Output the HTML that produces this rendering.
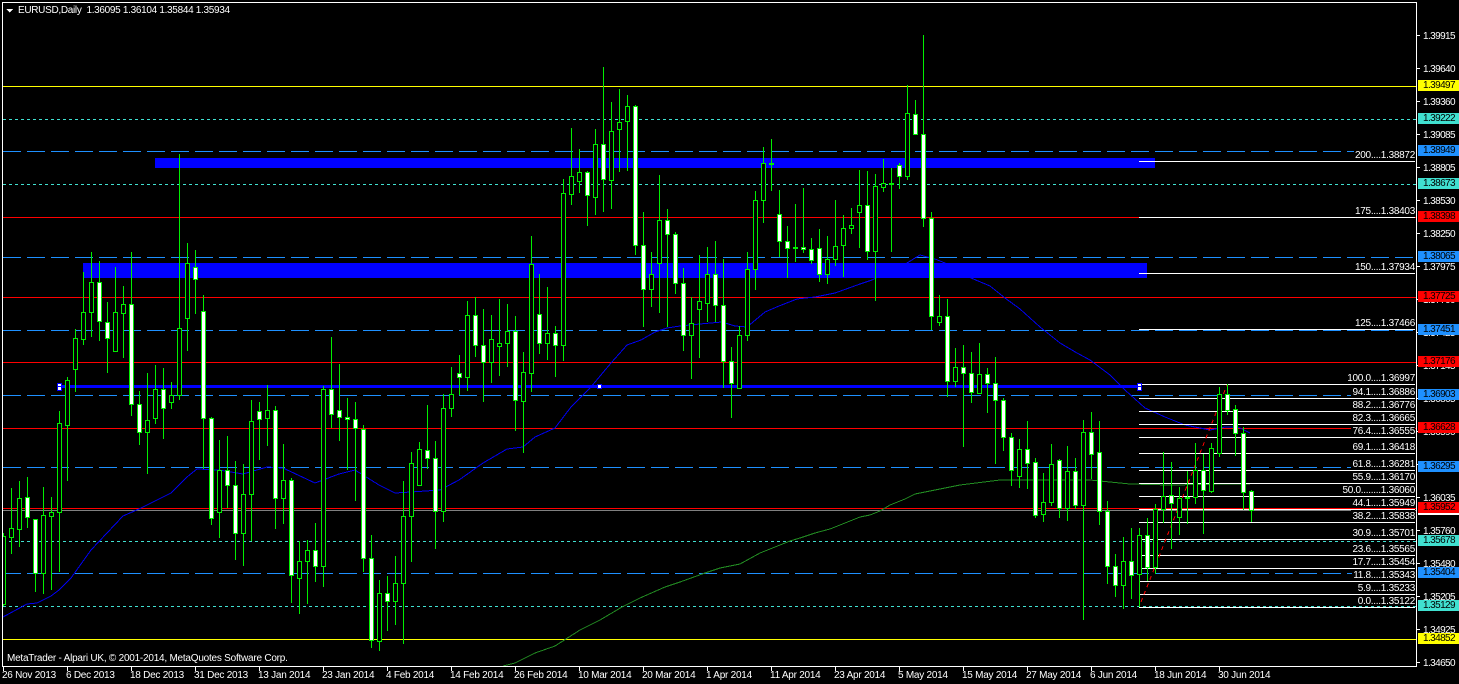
<!DOCTYPE html>
<html><head><meta charset="utf-8"><style>
html,body{margin:0;padding:0;background:#000;width:1459px;height:684px;overflow:hidden}
body{position:relative;font-family:"Liberation Sans",sans-serif;font-size:10px;line-height:11px;color:#fff}
svg{position:absolute;left:0;top:0}
div{position:absolute;white-space:pre}
.p{left:1423px;letter-spacing:-.6px;height:11px;line-height:13px}
.t{left:1418px;width:36px;padding-left:5px;height:11px;color:#000;letter-spacing:-.6px}
.f{right:44px;height:11px;background:#000;padding-left:1px;letter-spacing:-.28px;line-height:13px}
.x{top:669px;letter-spacing:-.25px;line-height:14px}
.y{background:#ff0}.c{background:#40e0d0}.b{background:#1e90ff}.r{background:#f00}
</style></head><body>
<svg width="1459" height="684" shape-rendering="crispEdges" fill="none">
<g stroke="#ff0"><path d="M3 86.5H1416M3 639.5H1416"/></g>
<g stroke="#40e0d0" stroke-dasharray="3 3"><path d="M3 119.5H1416M3 184.5H1416M3 541.5H1416M3 606.5H1416"/></g>
<g stroke="#1e90ff" stroke-dasharray="18 6"><path d="M3 151.5H1416M3 257.5H1416M3 330.5H1416M3 395.5H1416M3 467.5H1416M3 573.5H1416"/></g>
<g stroke="#f00"><path d="M3 217.5H1416M3 297.5H1416M3 362.5H1416M3 428.5H1416M3 508.5H1416"/></g>
<path d="M3 510.5H1416" stroke="#808080"/>
<polyline stroke="#0000f0" points="3,617 27,604 37,603 51,596 59,590 71,578 91,550 107,533 123,516 139,509 155,501 171,493 187,477 197,469 219,470 243,474 267,467 283,468 315,483 339,474 355,470 379,485 395,493 411,492 440,490 459,480 483,463 507,449 523,447 535,437 555,428 571,407 590,388 611,363 627,345 641,340 655,332 667,328 680,326 700,324 722,322 735,326 747,327 765,312 779,306 797,299 815,297 835,293 860,284 872,280 907,263 920,255 935,259 945,263 971,278 990,286 1005,298 1020,309 1040,327 1060,343 1077,353 1090,360 1110,375 1125,390 1145,408 1165,417 1185,425 1210,430 1225,427 1238,427 1250,433"/>
<polyline stroke="#228b22" points="503,666 515,663 535,653 555,646 580,630 600,620 622,607 640,598 665,587 680,582 705,573 720,568 740,564 760,553 770,549 790,541 800,538 815,533 830,529 845,523 860,517 870,515 880,511 890,505 905,499 915,494 930,491 945,488 960,485 1000,480 1060,480 1090,480 1120,483 1130,484 1170,485 1230,484 1250,484"/>
<rect x="155" y="158" width="1000" height="10" fill="#00f"/>
<rect x="83" y="263" width="1064" height="15" fill="#00f"/>
<path stroke="#fff" d="M1139 161.5H1415M1139 217.5H1415M1139 273.5H1415M1139 329.5H1415M1139 384.5H1415M1139 398.5H1415M1139 411.5H1415M1139 424.5H1415M1139 437.5H1415M1139 453.5H1415M1139 470.5H1415M1139 483.5H1415M1139 496.5H1415M1139 509.5H1415M1139 522.5H1415M1139 539.5H1415M1139 555.5H1415M1139 568.5H1415M1139 581.5H1415M1139 594.5H1415M1139 607.5H1415"/>
<path stroke="#f00" stroke-dasharray="4 4" d="M1141 602L1227 385"/>
<rect x="59" y="385" width="1080" height="3" fill="#00f"/>
<path stroke="#00ee00" d="M3.5 533V606M11.5 488V554M19.5 481V547M27.5 477V528M35.5 519V592M43.5 487V594M51.5 497V590M59.5 411V572M67.5 377V481M75.5 329V392M83.5 272V345M91.5 252V337M99.5 261V341M107.5 302V373M115.5 267V351M123.5 286V358M131.5 252V416M139.5 391V445M147.5 373V474M155.5 365V424M163.5 368V439M171.5 382V409M179.5 154V400M187.5 243V351M195.5 250V314M203.5 295V469M211.5 417V525M219.5 440V538M227.5 436V508M235.5 461V560M243.5 464V566M251.5 400V541M259.5 402V460M267.5 385V446M275.5 406V529M283.5 444V524M291.5 478V603M299.5 541V614M307.5 540V604M315.5 523V582M323.5 386V587M331.5 337V428M339.5 364V441M347.5 398V470M355.5 402V501M363.5 425V572M371.5 535V648M379.5 580V651M387.5 576V631M395.5 556V625M403.5 481V644M411.5 452V562M419.5 442V485M427.5 405V469M435.5 441V549M443.5 394V522M451.5 367V417M459.5 355V395M467.5 301V391M475.5 297V357M483.5 309V402M491.5 315V383M499.5 299V376M507.5 304V367M515.5 316V431M523.5 352V453M531.5 236V392M539.5 274V354M547.5 287V360M555.5 326V377M563.5 179V361M571.5 128V205M579.5 149V193M587.5 171V226M595.5 129V215M603.5 67V212M611.5 102V209M619.5 89V172M627.5 95V171M635.5 105V255M643.5 212V327M651.5 252V307M659.5 175V313M667.5 209V327M675.5 232V294M683.5 268V351M691.5 297V379M699.5 255V358M707.5 247V322M715.5 241V322M723.5 259V388M731.5 347V418M739.5 326V389M747.5 252V341M755.5 191V290M763.5 147V223M771.5 139V191M779.5 190V257M787.5 226V278M795.5 204V262M803.5 188V253M811.5 238V264M819.5 229V282M827.5 236V284M835.5 200V266M843.5 215V277M851.5 208V234M859.5 170V248M867.5 171V260M875.5 174V301M883.5 159V192M891.5 168V252M899.5 163V189M907.5 85V180M915.5 100V134M923.5 35V227M931.5 212V330M939.5 295V326M947.5 299V397M955.5 348V387M963.5 345V447M971.5 352V403M979.5 343V393M987.5 368V413M995.5 357V464M1003.5 398V451M1011.5 433V486M1019.5 439V488M1027.5 421V489M1035.5 458V518M1043.5 473V522M1051.5 444V506M1059.5 459V518M1067.5 446V521M1075.5 458V509M1083.5 420V620M1091.5 412V479M1099.5 421V525M1107.5 501V584M1115.5 554V597M1123.5 537V609M1131.5 528V599M1139.5 528V607M1147.5 518V581M1155.5 504V574M1163.5 452V523M1171.5 462V549M1179.5 487V535M1187.5 471V524M1195.5 443V504M1203.5 454V534M1211.5 443V493M1219.5 387V457M1227.5 384V415M1235.5 405V456M1243.5 427V510M1251.5 490V522"/>
<path stroke="#00ee00" fill="#000" d="M2.5 536.5h3V604.5h-3zM9.5 528.5h4V537.5h-4zM17.5 498.5h4V529.5h-4zM41.5 515.5h4V573.5h-4zM49.5 512.5h4V516.5h-4zM57.5 423.5h4V512.5h-4zM65.5 380.5h4V425.5h-4zM73.5 338.5h4V369.5h-4zM81.5 312.5h4V339.5h-4zM89.5 282.5h4V312.5h-4zM113.5 312.5h4V351.5h-4zM121.5 304.5h4V313.5h-4zM145.5 420.5h4V432.5h-4zM153.5 389.5h4V418.5h-4zM169.5 395.5h4V402.5h-4zM177.5 328.5h4V395.5h-4zM185.5 263.5h4V318.5h-4zM217.5 470.5h4V512.5h-4zM241.5 494.5h4V533.5h-4zM249.5 421.5h4V494.5h-4zM265.5 410.5h4V418.5h-4zM281.5 480.5h4V498.5h-4zM297.5 561.5h4V578.5h-4zM305.5 550.5h4V561.5h-4zM321.5 389.5h4V566.5h-4zM377.5 593.5h4V641.5h-4zM393.5 583.5h4V601.5h-4zM401.5 516.5h4V583.5h-4zM409.5 463.5h4V516.5h-4zM417.5 449.5h4V485.5h-4zM441.5 408.5h4V511.5h-4zM449.5 394.5h4V408.5h-4zM465.5 315.5h4V377.5h-4zM489.5 339.5h4V362.5h-4zM497.5 343.5h4V346.5h-4zM505.5 331.5h4V343.5h-4zM521.5 372.5h4V401.5h-4zM529.5 264.5h4V373.5h-4zM545.5 333.5h4V343.5h-4zM561.5 193.5h4V345.5h-4zM569.5 176.5h4V194.5h-4zM577.5 172.5h4V181.5h-4zM593.5 144.5h4V197.5h-4zM609.5 131.5h4V180.5h-4zM617.5 122.5h4V129.5h-4zM625.5 106.5h4V121.5h-4zM649.5 274.5h4V289.5h-4zM657.5 220.5h4V263.5h-4zM689.5 323.5h4V335.5h-4zM697.5 301.5h4V309.5h-4zM705.5 274.5h4V303.5h-4zM737.5 335.5h4V388.5h-4zM745.5 269.5h4V335.5h-4zM753.5 200.5h4V269.5h-4zM761.5 163.5h4V200.5h-4zM825.5 259.5h4V274.5h-4zM833.5 246.5h4V259.5h-4zM841.5 228.5h4V245.5h-4zM849.5 225.5h4V228.5h-4zM857.5 205.5h4V212.5h-4zM873.5 186.5h4V251.5h-4zM881.5 183.5h4V187.5h-4zM905.5 113.5h4V176.5h-4zM937.5 316.5h4V322.5h-4zM953.5 367.5h4V381.5h-4zM977.5 374.5h4V393.5h-4zM1017.5 449.5h4V476.5h-4zM1041.5 502.5h4V514.5h-4zM1049.5 464.5h4V502.5h-4zM1065.5 471.5h4V508.5h-4zM1081.5 432.5h4V505.5h-4zM1121.5 561.5h4V585.5h-4zM1137.5 535.5h4V574.5h-4zM1153.5 509.5h4V567.5h-4zM1161.5 496.5h4V509.5h-4zM1177.5 498.5h4V517.5h-4zM1193.5 470.5h4V497.5h-4zM1209.5 448.5h4V491.5h-4zM1217.5 394.5h4V453.5h-4z"/>
<path stroke="#00ee00" fill="#fff" d="M25.5 497.5h4V517.5h-4zM33.5 519.5h4V573.5h-4zM97.5 282.5h4V321.5h-4zM105.5 322.5h4V338.5h-4zM129.5 304.5h4V404.5h-4zM137.5 404.5h4V432.5h-4zM161.5 389.5h4V408.5h-4zM193.5 267.5h4V279.5h-4zM201.5 311.5h4V418.5h-4zM209.5 418.5h4V518.5h-4zM225.5 470.5h4V485.5h-4zM233.5 485.5h4V533.5h-4zM257.5 411.5h4V419.5h-4zM273.5 410.5h4V498.5h-4zM289.5 480.5h4V575.5h-4zM313.5 550.5h4V566.5h-4zM329.5 389.5h4V414.5h-4zM337.5 410.5h4V417.5h-4zM345.5 417.5h4V419.5h-4zM353.5 419.5h4V428.5h-4zM361.5 429.5h4V558.5h-4zM369.5 558.5h4V640.5h-4zM385.5 593.5h4V601.5h-4zM425.5 450.5h4V458.5h-4zM433.5 458.5h4V511.5h-4zM457.5 373.5h4V377.5h-4zM473.5 315.5h4V345.5h-4zM481.5 345.5h4V362.5h-4zM513.5 331.5h4V400.5h-4zM537.5 314.5h4V343.5h-4zM553.5 333.5h4V345.5h-4zM585.5 172.5h4V195.5h-4zM601.5 144.5h4V179.5h-4zM633.5 106.5h4V245.5h-4zM641.5 245.5h4V289.5h-4zM665.5 220.5h4V234.5h-4zM673.5 234.5h4V283.5h-4zM681.5 283.5h4V335.5h-4zM713.5 274.5h4V305.5h-4zM721.5 305.5h4V361.5h-4zM729.5 361.5h4V383.5h-4zM769.5 163.5h4V164.5h-4zM777.5 214.5h4V241.5h-4zM785.5 241.5h4V248.5h-4zM793.5 247.5h4V248.5h-4zM801.5 247.5h4V249.5h-4zM809.5 249.5h4V260.5h-4zM817.5 248.5h4V274.5h-4zM865.5 205.5h4V251.5h-4zM889.5 183.5h4V184.5h-4zM897.5 165.5h4V176.5h-4zM913.5 114.5h4V134.5h-4zM921.5 134.5h4V218.5h-4zM929.5 218.5h4V316.5h-4zM945.5 316.5h4V381.5h-4zM961.5 367.5h4V373.5h-4zM969.5 373.5h4V392.5h-4zM985.5 374.5h4V383.5h-4zM993.5 383.5h4V400.5h-4zM1001.5 400.5h4V437.5h-4zM1009.5 437.5h4V470.5h-4zM1025.5 449.5h4V463.5h-4zM1033.5 462.5h4V515.5h-4zM1057.5 460.5h4V508.5h-4zM1073.5 471.5h4V505.5h-4zM1089.5 432.5h4V454.5h-4zM1097.5 452.5h4V511.5h-4zM1105.5 511.5h4V566.5h-4zM1113.5 566.5h4V585.5h-4zM1129.5 561.5h4V575.5h-4zM1145.5 535.5h4V567.5h-4zM1169.5 495.5h4V503.5h-4zM1185.5 497.5h4V498.5h-4zM1201.5 470.5h4V490.5h-4zM1225.5 394.5h4V410.5h-4zM1233.5 409.5h4V433.5h-4zM1241.5 433.5h4V492.5h-4zM1249.5 491.5h4V510.5h-4z"/>
<rect x="57" y="383" width="5" height="8" fill="#00f"/><rect x="58" y="384" width="3" height="2" fill="#fff"/><rect x="58" y="387" width="3" height="3" fill="#fff"/>
<rect x="597" y="384" width="5" height="5" fill="#00f"/><rect x="598" y="385" width="3" height="3" fill="#fff"/>
<rect x="1137" y="383" width="5" height="8" fill="#00f"/><rect x="1138" y="384" width="3" height="2" fill="#fff"/><rect x="1138" y="387" width="3" height="3" fill="#fff"/>
<path stroke="#fff" d="M2.5 2V667M2 2.5H1417M1416.5 2V667M2 666.5H1417"/>
<path stroke="#fff" d="M3.5 667V671M67.5 667V671M131.5 667V671M195.5 667V671M259.5 667V671M323.5 667V671M387.5 667V671M451.5 667V671M515.5 667V671M579.5 667V671M643.5 667V671M707.5 667V671M771.5 667V671M835.5 667V671M899.5 667V671M963.5 667V671M1027.5 667V671M1091.5 667V671M1155.5 667V671M1219.5 667V671M1417 35.5H1420M1417 68.5H1420M1417 101.5H1420M1417 134.5H1420M1417 167.5H1420M1417 200.5H1420M1417 233.5H1420M1417 266.5H1420M1417 299.5H1420M1417 332.5H1420M1417 365.5H1420M1417 398.5H1420M1417 431.5H1420M1417 464.5H1420M1417 497.5H1420M1417 530.5H1420M1417 563.5H1420M1417 596.5H1420M1417 629.5H1420M1417 662.5H1420"/>
<path fill="#fff" d="M6 9H13L9.5 12.5Z"/>
</svg>
<div style="left:18px;top:5px;letter-spacing:-.31px">EURUSD,Daily  1.36095 1.36104 1.35844 1.35934</div>
<div style="left:7px;top:653px;letter-spacing:-.23px">MetaTrader - Alpari UK, © 2001-2014, MetaQuotes Software Corp.</div>
<div class="x" style="left:2px">26 Nov 2013</div>
<div class="x" style="left:66px">6 Dec 2013</div>
<div class="x" style="left:130px">18 Dec 2013</div>
<div class="x" style="left:194px">31 Dec 2013</div>
<div class="x" style="left:258px">13 Jan 2014</div>
<div class="x" style="left:322px">23 Jan 2014</div>
<div class="x" style="left:386px">4 Feb 2014</div>
<div class="x" style="left:450px">14 Feb 2014</div>
<div class="x" style="left:514px">26 Feb 2014</div>
<div class="x" style="left:578px">10 Mar 2014</div>
<div class="x" style="left:642px">20 Mar 2014</div>
<div class="x" style="left:706px">1 Apr 2014</div>
<div class="x" style="left:770px">11 Apr 2014</div>
<div class="x" style="left:834px">23 Apr 2014</div>
<div class="x" style="left:898px">5 May 2014</div>
<div class="x" style="left:962px">15 May 2014</div>
<div class="x" style="left:1026px">27 May 2014</div>
<div class="x" style="left:1090px">6 Jun 2014</div>
<div class="x" style="left:1154px">18 Jun 2014</div>
<div class="x" style="left:1218px">30 Jun 2014</div>
<div class="p" style="top:30px">1.39915</div>
<div class="p" style="top:63px">1.39640</div>
<div class="p" style="top:96px">1.39360</div>
<div class="p" style="top:129px">1.39085</div>
<div class="p" style="top:162px">1.38805</div>
<div class="p" style="top:195px">1.38530</div>
<div class="p" style="top:228px">1.38250</div>
<div class="p" style="top:261px">1.37975</div>
<div class="p" style="top:294px">1.37700</div>
<div class="p" style="top:327px">1.37425</div>
<div class="p" style="top:360px">1.37145</div>
<div class="p" style="top:393px">1.36865</div>
<div class="p" style="top:426px">1.36590</div>
<div class="p" style="top:459px">1.36310</div>
<div class="p" style="top:492px">1.36035</div>
<div class="p" style="top:525px">1.35760</div>
<div class="p" style="top:558px">1.35480</div>
<div class="p" style="top:591px">1.35205</div>
<div class="p" style="top:624px">1.34925</div>
<div class="p" style="top:657px">1.34650</div>
<div style="left:1418px;top:504px;width:41px;height:11px;background:#fff"></div>
<div class="t y" style="top:80px">1.39497</div>
<div class="t c" style="top:113px">1.39222</div>
<div class="t b" style="top:145px">1.38949</div>
<div class="t c" style="top:178px">1.38673</div>
<div class="t r" style="top:211px">1.38398</div>
<div class="t b" style="top:251px">1.38065</div>
<div class="t r" style="top:291px">1.37725</div>
<div class="t b" style="top:324px">1.37451</div>
<div class="t r" style="top:356px">1.37176</div>
<div class="t b" style="top:389px">1.36903</div>
<div class="t r" style="top:422px">1.36628</div>
<div class="t b" style="top:461px">1.36295</div>
<div class="t r" style="top:502px">1.35952</div>
<div class="t c" style="top:535px">1.35678</div>
<div class="t b" style="top:567px">1.35404</div>
<div class="t c" style="top:600px">1.35129</div>
<div class="t y" style="top:633px">1.34852</div>
<div class="f" style="top:149px">200....1.38872</div>
<div class="f" style="top:205px">175....1.38403</div>
<div class="f" style="top:261px">150....1.37934</div>
<div class="f" style="top:317px">125....1.37466</div>
<div class="f" style="top:372px">100.0....1.36997</div>
<div class="f" style="top:386px">94.1....1.36886</div>
<div class="f" style="top:399px">88.2....1.36776</div>
<div class="f" style="top:412px">82.3....1.36665</div>
<div class="f" style="top:425px">76.4....1.36555</div>
<div class="f" style="top:441px">69.1....1.36418</div>
<div class="f" style="top:458px">61.8....1.36281</div>
<div class="f" style="top:471px">55.9....1.36170</div>
<div class="f" style="top:484px">50.0........1.36060</div>
<div class="f" style="top:497px">44.1....1.35949</div>
<div class="f" style="top:510px">38.2....1.35838</div>
<div class="f" style="top:527px">30.9....1.35701</div>
<div class="f" style="top:543px">23.6....1.35565</div>
<div class="f" style="top:556px">17.7....1.35454</div>
<div class="f" style="top:569px">11.8....1.35343</div>
<div class="f" style="top:582px">5.9....1.35233</div>
<div class="f" style="top:595px">0.0....1.35122</div>
</body></html>
